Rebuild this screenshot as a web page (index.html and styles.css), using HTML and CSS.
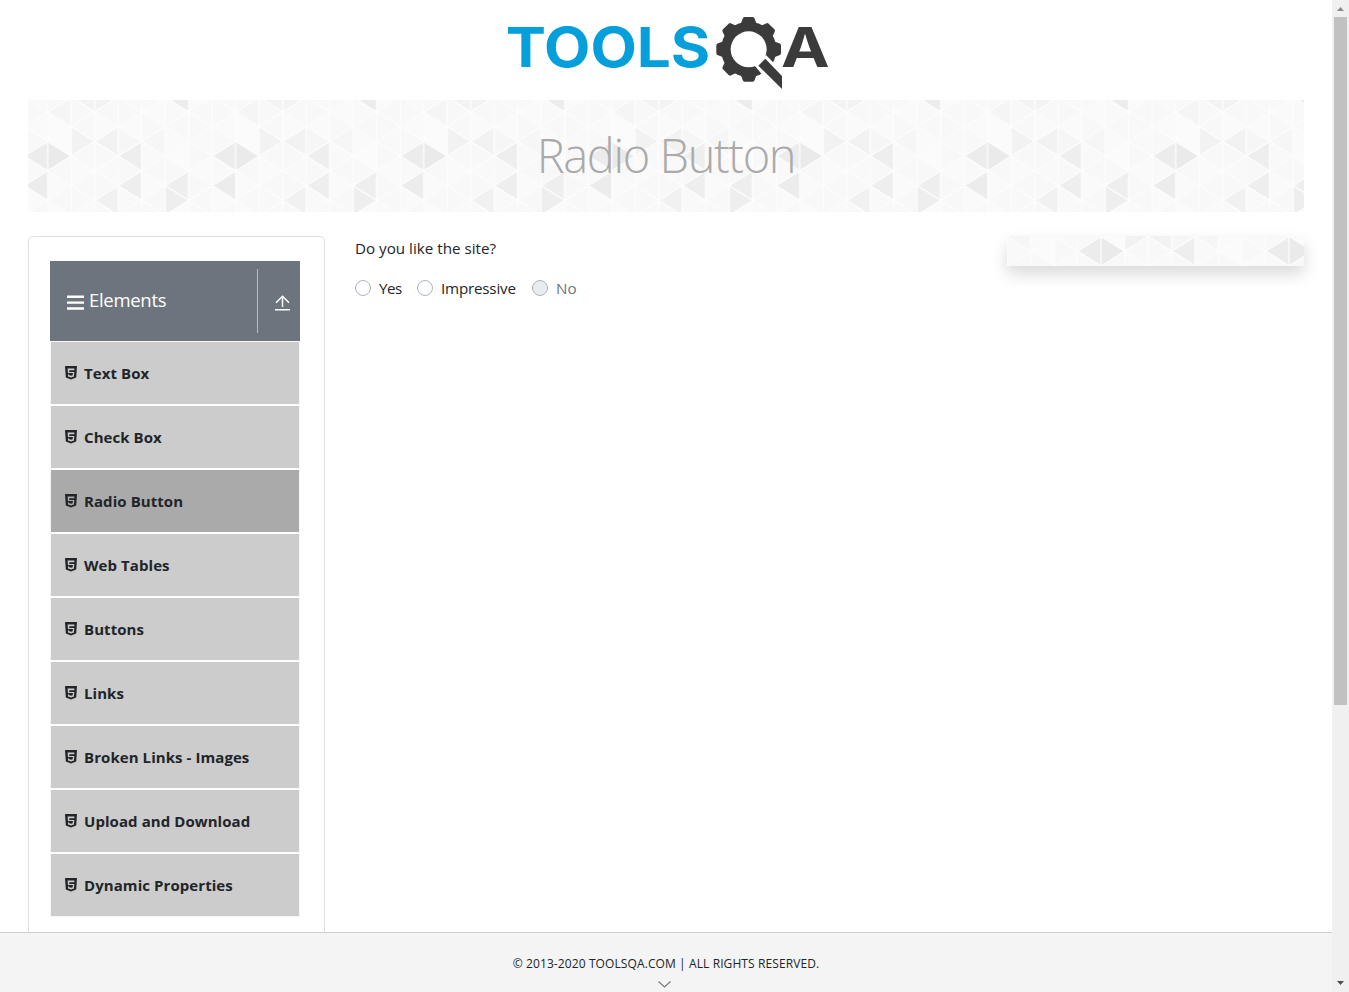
FILE: index.html
```html
<!DOCTYPE html>
<html lang="en">
<head>
<meta charset="utf-8">
<title>ToolsQA</title>
<link rel="stylesheet" href="styles.css">
</head>
<body>
<svg class="defs" width="0" height="0" aria-hidden="true">
  <defs>
    <symbol id="html5" viewBox="0 0 12 14"><path fill="#212529" fill-rule="evenodd" d="M0 0h12l-.8 11.6L6 13.5.8 11.6zM2.6 2.6l.4 4.5h4.9l-.2 2.1-1.7.5-1.7-.5-.1-.7H2.9l.2 2 2.9.9 2.9-.9.4-4.6H4.3l-.1-1.6h5.1l.1-1.7z"/></symbol>
    <pattern id="triangles" width="188" height="118" patternUnits="userSpaceOnUse">
      <rect width="188" height="118" fill="#f9f9f9"/>
      <g id="cells"></g>
    </pattern>
  </defs>
</svg>
<div class="page">
  <header class="top">
    <svg class="logo" viewBox="0 0 1020 270">
      <text class="word" x="17" y="177" textLength="614" lengthAdjust="spacingAndGlyphs">TOOLS</text>
      <g fill="#3b3b3b">
        <circle cx="746" cy="124" r="83"/>
        <path id="tooth" d="M720 54L728 32Q729 27 734 27H758Q763 27 764 32L772 54z"/>
        <use href="#tooth" transform="rotate(45 746 124)"/>
        <use href="#tooth" transform="rotate(90 746 124)"/>
        <use href="#tooth" transform="rotate(135 746 124)"/>
        <use href="#tooth" transform="rotate(180 746 124)"/>
        <use href="#tooth" transform="rotate(225 746 124)"/>
        <use href="#tooth" transform="rotate(270 746 124)"/>
        <use href="#tooth" transform="rotate(315 746 124)"/>
      </g>
      <circle cx="746" cy="124" r="54" fill="#fff"/>
      <path fill="#fff" d="M763 172L798 141L822 166L870 212V260L783 196z"/>
      <path fill="#3b3b3b" d="M775 173L796 152L846 204V243z"/>
      <text class="word dark" x="843" y="177" textLength="146" lengthAdjust="spacingAndGlyphs">A</text>
    </svg>
  </header>
  <section class="banner">
    <svg class="pattern" viewBox="0 0 1276 112"><g transform="translate(19.7 0)"><rect x="-20" width="1277" height="112" fill="url(#triangles)"/></g></svg>
    <h1>Radio Button</h1>
  </section>
  <main class="columns">
    <aside class="card">
      <div class="group">
        <svg class="bars" viewBox="0 0 17 15"><path stroke="#fff" stroke-width="2.4" d="M0 1.7h17M0 7.6h17M0 13.5h17"/></svg>
        <span class="group-name">Elements</span>
        <span class="toggle"><svg width="15" height="16" viewBox="0 0 15 16"><path fill="none" stroke="#fff" stroke-width="1.5" d="M7.5 12V1.5M1 7.7l6.5-6.5L14 7.7M0 14.7h15"/></svg></span>
      </div>
      <ul class="menu">
        <li><svg><use href="#html5"/></svg><span>Text Box</span></li>
        <li><svg><use href="#html5"/></svg><span>Check Box</span></li>
        <li class="active"><svg><use href="#html5"/></svg><span>Radio Button</span></li>
        <li><svg><use href="#html5"/></svg><span>Web Tables</span></li>
        <li><svg><use href="#html5"/></svg><span>Buttons</span></li>
        <li><svg><use href="#html5"/></svg><span>Links</span></li>
        <li><svg><use href="#html5"/></svg><span>Broken Links - Images</span></li>
        <li><svg><use href="#html5"/></svg><span>Upload and Download</span></li>
        <li><svg><use href="#html5"/></svg><span>Dynamic Properties</span></li>
      </ul>
    </aside>
    <section class="form">
      <p class="question">Do you like the site?</p>
      <div class="options">
        <label class="yes"><i></i><span>Yes</span></label>
        <label class="impressive"><i></i><span>Impressive</span></label>
        <label class="no"><i></i><span>No</span></label>
      </div>
    </section>
    <aside class="promo"><svg class="pattern" viewBox="0 0 297 30"><g transform="translate(94.2 -41)"><rect x="-95" y="41" width="298" height="30" fill="url(#triangles)"/></g></svg></aside>
  </main>
  <footer class="footer">
    <span class="copy">© 2013-2020 TOOLSQA.COM | ALL RIGHTS RESERVED.</span>
    <svg class="chevron" viewBox="0 0 13 7"><path fill="none" stroke="#777" stroke-width="1.1" d="M.5.5l6 5.5 6-5.5"/></svg>
  </footer>
</div>
<div class="scrollbar">
  <svg width="17" height="17"><path fill="#8b8b8b" d="M5 11h7L8.5 7z"/></svg>
  <div class="thumb"></div>
  <svg class="down" width="17" height="17"><path fill="#505050" d="M5 6h7L8.5 10z"/></svg>
</div>
<script src="pattern.js"></script>
</body>
</html>
```
FILE: styles.css
```css
* { box-sizing: border-box; }
body {
  margin: 0;
  width: 1349px;
  height: 992px;
  display: flex;
  overflow: hidden;
  background: #fff;
  color: #212529;
  font: 15.2px/24px "Open Sans", "Noto Sans", sans-serif;
}
.defs { position: absolute; }
.page { width: 1332px; height: 992px; display: flex; flex-direction: column; }
.top { height: 100px; padding: 8px 0 0 500px; flex: none; }
.logo { display: block; width: 340px; height: 90px; }
.word { font: 700 166px Inter, sans-serif; fill: #059fdc; }
.dark { fill: #3b3b3b; }
.banner { display: grid; width: 1276px; height: 112px; margin-left: 28px; flex: none; }
.banner > * { grid-area: 1 / 1; }
.pattern { display: block; width: 100%; height: 100%; }
h1 {
  margin: 0;
  justify-self: center;
  font-size: 47px;
  font-weight: 300;
  line-height: 110px;
  letter-spacing: -1.4px;
  color: #aaa;
  z-index: 1;
}
.columns { display: flex; flex: 1; min-height: 0; padding: 24px 28px 0; overflow: hidden; }
.card {
  width: 297px;
  height: 760px;
  flex: none;
  padding: 24px 24px 0 21px;
  border: 1px solid #dfdfdf;
  border-radius: 5px;
}
.group { display: flex; align-items: center; width: 250px; height: 80px; padding-left: 17px; background: #6c757d; color: #fff; }
.bars { width: 17px; height: 15px; margin: 3px 5px 0 0; }
.group-name { flex: 1; font-size: 18.5px; letter-spacing: -.3px; padding-bottom: 2px; }
.toggle { display: flex; width: 43px; height: 64px; padding: 26px 0 0 17px; border-left: 1px solid #b6babe; }
.menu { list-style: none; margin: 0; padding: 0; width: 250px; border: 1px solid #f6f6f6; }
.menu li { display: flex; align-items: center; height: 62px; margin-bottom: 2px; padding-left: 14px; background: #ccc; font-size: 15px; font-weight: 700; white-space: nowrap; letter-spacing: .07px; }
.menu li:last-child { margin-bottom: 0; }
.menu .active { background: #aaa; }
.menu svg { width: 12px; height: 14px; margin-right: 7px; }
.form { width: 652px; padding-left: 30px; }
.question { margin: 0 0 16px; }
.options { display: flex; letter-spacing: -.2px; }
.options label { display: flex; align-items: center; }
.options .yes { width: 62px; letter-spacing: -.5px; }
.options .impressive { width: 115px; }
.options i { width: 16px; height: 16px; margin-right: 8px; border: 1px solid #adb5bd; border-radius: 50%; }
.options .no { color: #6c757d; letter-spacing: 0; }
.no i { background: #e9ecef; }
.promo { width: 297px; height: 30px; margin-left: auto; flex: none; box-shadow: 0 8px 16px rgba(0, 0, 0, .15); }
.footer { height: 60px; flex: none; display: flex; flex-direction: column; align-items: center; padding-top: 19px; background: #f4f4f4; border-top: 1px solid #ccc; }
.copy { font-size: 12px; letter-spacing: .1px; line-height: 24px; }
.chevron { width: 13px; height: 7px; margin: 5px 3px 0 0; }
.scrollbar { display: flex; flex-direction: column; width: 17px; height: 992px; background: #f0f0f0; }
.scrollbar svg { display: block; flex: none; }
.thumb { width: 13px; height: 688px; margin-left: 2px; background: #c1c1c1; }
.down { margin-top: auto; }
```
FILE: pattern.js
```javascript
// Triangular lattice tile: eight columns, rows half a triangle apart.
const W = 23.5, H = 14.75, TOP = 12;
const shades = {
  '0,3': '#eaeaea', '7,3': '#ececec', '3,3': '#eeeeee', '7,5': '#ececec',
  '3,5': '#eeeeee', '5,5': '#eeeeee', '5,6': '#eeeeee', '2,6': '#f1f1f1',
  '1,2': '#f2f2f2', '2,2': '#f2f2f2', '1,-1': '#f3f3f3', '2,-1': '#f3f3f3',
  '5,-1': '#ececec', '0,0': '#f5f5f5', '4,2': '#f6f6f6', '3,2': '#f6f6f6',
  '5,3': '#fbfbfb', '0,1': '#fbfbfb', '0,2': '#fbfbfb', '3,1': '#fafafa',
  '0,5': '#fafafa', '4,5': '#fafafa', '4,3': '#f9f9f9'
};
const light = ['#f8f8f8', '#f9f9f9', '#f8f8f8', '#fafafa', '#f8f8f8'];
let out = '';
for (let c = 0; c < 8; c++) {
  for (let j = -1; j < 8; j++) {
    const right = (c + j) % 2 !== 0;
    const base = right ? c * W : (c + 1) * W;
    const apex = right ? (c + 1) * W : c * W;
    const y = TOP + j * H;
    const fill = shades[c + ',' + j] || light[(c * 3 + j + 1) % 5];
    out += `<path fill="${fill}" stroke="#fdfdfd" stroke-width="1.3" d="M${base} ${y - H}V${y + H}L${apex} ${y}z"/>`;
  }
}
document.getElementById('cells').innerHTML = out;
```
